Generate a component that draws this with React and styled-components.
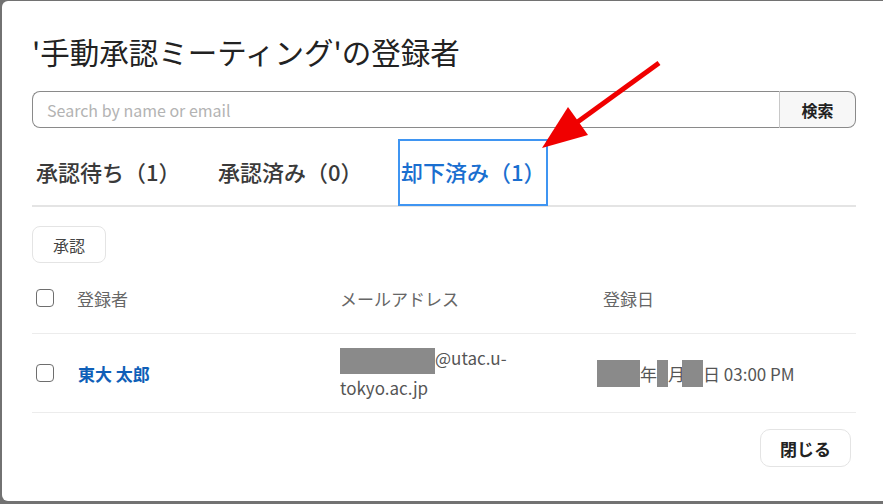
import React, { useState } from "react";
import styled, { createGlobalStyle } from "styled-components";

const GlobalStyle = createGlobalStyle`
  html, body {
    margin: 0;
    padding: 0;
    background: #727272;
    overflow: hidden;
  }
  body {
    font-family: "Noto Sans CJK JP", "Noto Sans", sans-serif;
  }
`;

const Backdrop = styled.div`
  width: 883px;
  height: 504px;
  padding: 1px 0 0 2px;
  box-sizing: border-box;
  overflow: hidden;
`;

const Dialog = styled.div`
  position: relative;
  width: 900px;
  height: 500px;
  background: #fff;
  border-radius: 6px;
  box-sizing: border-box;
  padding: 28px 0 0 30px;
`;

const Content = styled.div`
  width: 824px;
  display: flex;
  flex-direction: column;
`;

const Title = styled.h1`
  margin: 0;
  font-size: 29.5px;
  font-weight: 400;
  line-height: 44px;
  color: #222;
`;

const SearchBar = styled.div`
  display: flex;
  margin-top: 18px;
  height: 37px;
`;

const SearchInput = styled.input`
  flex: 1;
  min-width: 0;
  border: 1px solid #8a8a8a;
  border-right: none;
  border-radius: 8px 0 0 8px;
  padding: 0 14px;
  font-family: inherit;
  font-size: 16px;
  color: #333;
  outline: none;
  &::placeholder {
    color: #b3b3b3;
  }
`;

const SearchButton = styled.button`
  width: 77px;
  border: 1px solid #8a8a8a;
  border-left: 1px solid #c8c8c8;
  border-radius: 0 8px 8px 0;
  background: #f7f7f7;
  font-family: inherit;
  font-size: 16px;
  font-weight: 700;
  color: #222;
`;

const Tabs = styled.div`
  display: flex;
  gap: 33px;
  margin-top: 11px;
  border-bottom: 2px solid #e4e4e4;
`;

const Tab = styled.button`
  width: 150px;
  height: 67px;
  box-sizing: border-box;
  padding: 0 0 4px ${(p) => (p.first ? 2 : 1)}px;
  text-align: left;
  white-space: nowrap;
  background: none;
  font-family: inherit;
  font-size: 22px;
  font-weight: 500;
  color: ${(p) => (p.active ? "#1a6fd0" : "#3a3a3a")};
  border: 2px solid ${(p) => (p.active ? "#3f95f2" : "transparent")};
  margin-bottom: -1px;
  cursor: pointer;
`;

const Toolbar = styled.div`
  margin-top: 19px;
`;

const OutlineButton = styled.button`
  height: ${(p) => p.h || 37}px;
  padding: 0 ${(p) => p.px || 20}px;
  border: 1px solid #e4e4e4;
  border-radius: ${(p) => p.r || 8}px;
  background: #fff;
  font-family: inherit;
  font-size: ${(p) => p.fs || 16}px;
  font-weight: ${(p) => p.fw || 400};
  color: ${(p) => p.color || "#444"};
`;

const Table = styled.div`
  display: flex;
  flex-direction: column;
`;

const Row = styled.div`
  display: grid;
  grid-template-columns: 45px 263px 257px 1fr;
  align-items: center;
  height: ${(p) => p.h}px;
  border-bottom: 1px solid #ececec;
`;

const Check = styled.span`
  display: inline-block;
  width: 18px;
  height: 18px;
  margin-left: 4px;
  border: 1.5px solid #6e6e6e;
  border-radius: 4px;
  box-sizing: border-box;
`;

const HeadCell = styled.div`
  font-size: 17px;
  color: #666;
  padding-left: ${(p) => p.pl || 0}px;
`;

const NameLink = styled.a`
  font-size: 17px;
  font-weight: 700;
  color: #0f5fb8;
  text-decoration: none;
  padding-left: 1px;
`;

const EmailCell = styled.div`
  width: 200px;
  font-size: 17px;
  line-height: 28px;
  color: #555;
`;

const DateCell = styled.div`
  font-size: 17px;
  color: #555;
  display: flex;
  align-items: center;
`;

const Redact = styled.span`
  display: inline-block;
  vertical-align: middle;
  width: ${(p) => p.w}px;
  height: ${(p) => p.h}px;
  margin-left: ${(p) => p.ml || 0}px;
  background: #8a8a8a;
`;

const Footer = styled.div`
  display: flex;
  justify-content: flex-end;
  margin-top: 16px;
  padding-right: 5px;
`;

const Arrow = styled.svg`
  position: absolute;
  left: -2px;
  top: -1px;
  pointer-events: none;
`;

export default function App() {
  const [active, setActive] = useState(2);
  const tabs = ["承認待ち（1）", "承認済み（0）", "却下済み（1）"];

  return (
    <Backdrop>
      <GlobalStyle />
      <Dialog>
        <Content>
          <Title>'手動承認ミーティング'の登録者</Title>
          <SearchBar>
            <SearchInput placeholder="Search by name or email" />
            <SearchButton>検索</SearchButton>
          </SearchBar>
          <Tabs>
            {tabs.map((t, i) => (
              <Tab key={t} first={i === 0} active={i === active} onClick={() => setActive(i)}>
                {t}
              </Tab>
            ))}
          </Tabs>
          <Toolbar>
            <OutlineButton px={20}>承認</OutlineButton>
          </Toolbar>
          <Table>
            <Row h={70}>
              <Check />
              <HeadCell>登録者</HeadCell>
              <HeadCell>メールアドレス</HeadCell>
              <HeadCell pl={6}>登録日</HeadCell>
            </Row>
            <Row h={78}>
              <Check />
              <NameLink href="#">東大 太郎</NameLink>
              <EmailCell>
                <Redact w={95} h={26} />@utac.u-tokyo.ac.jp
              </EmailCell>
              <DateCell>
                <Redact w={43} h={27} />年<Redact w={11} h={27} />月
                <Redact w={21} h={27} ml={-3} />日 03:00 PM
              </DateCell>
            </Row>
          </Table>
          <Footer>
            <OutlineButton h={38} px={19} r={10} fs={17} fw={700} color="#222">
              閉じる
            </OutlineButton>
          </Footer>
        </Content>
        <Arrow width="883" height="504" viewBox="0 0 883 504">
          <line x1="659" y1="63" x2="572" y2="126" stroke="#f00000" strokeWidth="5" strokeLinecap="butt" />
          <polygon points="542,148 568,107 588,135" fill="#f00000" />
        </Arrow>
      </Dialog>
    </Backdrop>
  );
}
